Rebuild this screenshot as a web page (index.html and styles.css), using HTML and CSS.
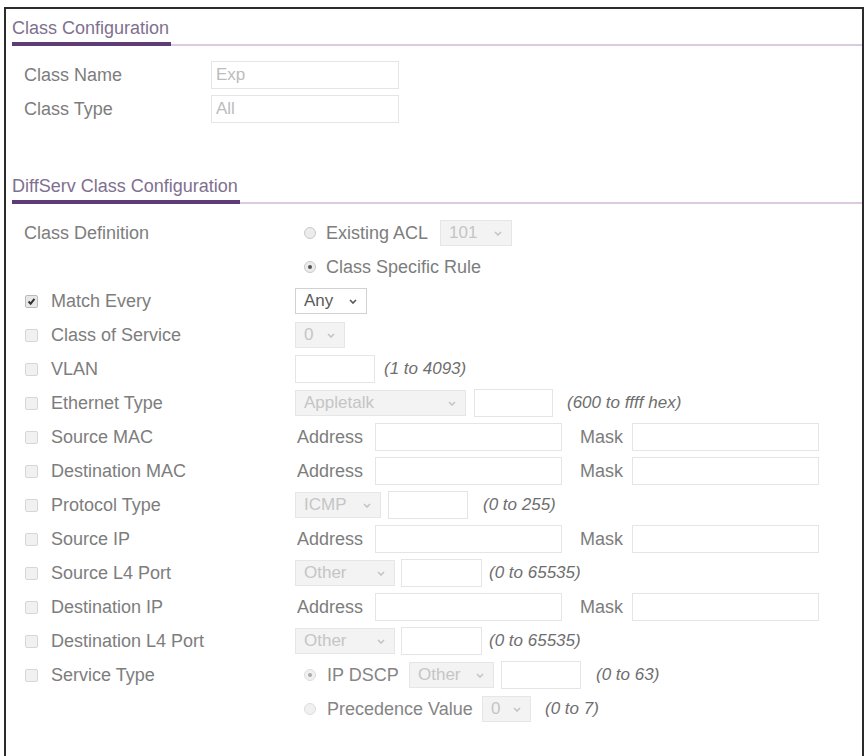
FILE: index.html
```html
<!DOCTYPE html>
<html>
<head>
<meta charset="utf-8">
<link rel="stylesheet" href="styles.css">
</head>
<body>
<div class="panel">
  <h2 class="sec-title"><span>Class Configuration</span></h2>
  <div class="sec1">
    <div class="row1"><span class="lbl1">Class Name</span><span class="box ro w188">Exp</span></div>
    <div class="row1"><span class="lbl1">Class Type</span><span class="box ro w188">All</span></div>
  </div>

  <h2 class="sec-title sec-title2"><span>DiffServ Class Configuration</span></h2>
  <div class="sec2">
    <div class="row">
      <div class="lcol"><span class="lbl">Class Definition</span></div>
      <div class="ctl rgroup">
        <span class="radio"></span><span class="rtxt">Existing ACL</span>
        <span class="sel dis w72 ml12"><span class="sv">101</span><svg class="chev" viewBox="0 0 8 5"><polyline points="1,1 4,4 7,1"/></svg></span>
      </div>
    </div>
    <div class="row">
      <div class="lcol"></div>
      <div class="ctl rgroup">
        <span class="radio on"></span><span class="rtxt">Class Specific Rule</span>
      </div>
    </div>
    <div class="row">
      <div class="lcol"><span class="cb on"><svg viewBox="0 0 13 13"><polyline points="3,6.5 5.5,9 10,3.5"/></svg></span><span class="lbl">Match Every</span></div>
      <div class="ctl">
        <span class="sel act w72"><span class="sv">Any</span><svg class="chev" viewBox="0 0 8 5"><polyline points="1,1 4,4 7,1"/></svg></span>
      </div>
    </div>
    <div class="row">
      <div class="lcol"><span class="cb"></span><span class="lbl">Class of Service</span></div>
      <div class="ctl">
        <span class="sel dis w50"><span class="sv">0</span><svg class="chev" viewBox="0 0 8 5"><polyline points="1,1 4,4 7,1"/></svg></span>
      </div>
    </div>
    <div class="row">
      <div class="lcol"><span class="cb"></span><span class="lbl">VLAN</span></div>
      <div class="ctl">
        <span class="box w80"></span><span class="hint ml9">(1 to 4093)</span>
      </div>
    </div>
    <div class="row">
      <div class="lcol"><span class="cb"></span><span class="lbl">Ethernet Type</span></div>
      <div class="ctl">
        <span class="sel dis w171"><span class="sv">Appletalk</span><svg class="chev" viewBox="0 0 8 5"><polyline points="1,1 4,4 7,1"/></svg></span>
        <span class="box w79 ml8"></span><span class="hint ml14">(600 to ffff hex)</span>
      </div>
    </div>
    <div class="row">
      <div class="lcol"><span class="cb"></span><span class="lbl">Source MAC</span></div>
      <div class="ctl">
        <span class="addr">Address</span><span class="box w187"></span><span class="mask">Mask</span><span class="box w187"></span>
      </div>
    </div>
    <div class="row">
      <div class="lcol"><span class="cb"></span><span class="lbl">Destination MAC</span></div>
      <div class="ctl">
        <span class="addr">Address</span><span class="box w187"></span><span class="mask">Mask</span><span class="box w187"></span>
      </div>
    </div>
    <div class="row">
      <div class="lcol"><span class="cb"></span><span class="lbl">Protocol Type</span></div>
      <div class="ctl">
        <span class="sel dis w86"><span class="sv">ICMP</span><svg class="chev" viewBox="0 0 8 5"><polyline points="1,1 4,4 7,1"/></svg></span>
        <span class="box w80 ml7"></span><span class="hint ml15">(0 to 255)</span>
      </div>
    </div>
    <div class="row">
      <div class="lcol"><span class="cb"></span><span class="lbl">Source IP</span></div>
      <div class="ctl">
        <span class="addr">Address</span><span class="box w187"></span><span class="mask">Mask</span><span class="box w187"></span>
      </div>
    </div>
    <div class="row">
      <div class="lcol"><span class="cb"></span><span class="lbl">Source L4 Port</span></div>
      <div class="ctl">
        <span class="sel dis w100"><span class="sv">Other</span><svg class="chev" viewBox="0 0 8 5"><polyline points="1,1 4,4 7,1"/></svg></span>
        <span class="box w81 ml6"></span><span class="hint ml7">(0 to 65535)</span>
      </div>
    </div>
    <div class="row">
      <div class="lcol"><span class="cb"></span><span class="lbl">Destination IP</span></div>
      <div class="ctl">
        <span class="addr">Address</span><span class="box w187"></span><span class="mask">Mask</span><span class="box w187"></span>
      </div>
    </div>
    <div class="row">
      <div class="lcol"><span class="cb"></span><span class="lbl">Destination L4 Port</span></div>
      <div class="ctl">
        <span class="sel dis w100"><span class="sv">Other</span><svg class="chev" viewBox="0 0 8 5"><polyline points="1,1 4,4 7,1"/></svg></span>
        <span class="box w81 ml6"></span><span class="hint ml7">(0 to 65535)</span>
      </div>
    </div>
    <div class="row">
      <div class="lcol"><span class="cb"></span><span class="lbl">Service Type</span></div>
      <div class="ctl sgroup">
        <span class="radio on dim"></span><span class="stxt w82">IP DSCP</span>
        <span class="sel dis w85"><span class="sv">Other</span><svg class="chev" viewBox="0 0 8 5"><polyline points="1,1 4,4 7,1"/></svg></span>
        <span class="box w80 ml7"></span><span class="hint ml15">(0 to 63)</span>
      </div>
    </div>
    <div class="row">
      <div class="lcol"></div>
      <div class="ctl sgroup">
        <span class="radio dim"></span><span class="stxt w155">Precedence Value</span>
        <span class="sel dis w49"><span class="sv">0</span><svg class="chev" viewBox="0 0 8 5"><polyline points="1,1 4,4 7,1"/></svg></span>
        <span class="hint ml14">(0 to 7)</span>
      </div>
    </div>
  </div>
</div>
</body>
</html>
```
FILE: styles.css
```css
* { box-sizing: border-box; }
body {
  margin: 0;
  background: #fff;
  font-family: "Liberation Sans", Arial, sans-serif;
  color: #7d7d7d;
}
.panel {
  margin: 7px 0 0 4px;
  width: 860px;
  height: 760px;
  border: 2px solid #2b2b2b;
  padding-top: 9px;
  overflow: hidden;
}
.sec-title {
  margin: 0 0 0 6px;
  display: flex;
  border-bottom: 2px solid #dccbe0;
  font-weight: normal;
  font-size: 18px;
}
.sec-title span {
  display: block;
  line-height: 21px;
  padding: 0 2px 3px 0;
  border-bottom: 4px solid #5e3c78;
  margin-bottom: -2px;
  color: #80708f;
}
.sec-title2 { margin-top: 50px; }
.sec1 { margin-top: 12px; padding-left: 18px; }
.row1 { height: 34px; display: flex; align-items: center; }
.lbl1 { width: 187px; font-size: 18px; }
.box {
  display: inline-flex;
  align-items: center;
  height: 28px;
  border: 1px solid #e5e5e5;
  background: #fff;
  font-size: 17px;
  padding-left: 4px;
}
.box.ro { color: #bcbcbc; }
.sec2 { margin-top: 12px; padding-left: 18px; }
.row {
  height: 34px;
  display: grid;
  grid-template-columns: 271px 1fr;
  align-items: center;
}
.lcol { display: flex; align-items: center; }
.lbl { font-size: 18px; }
.cb {
  width: 13px;
  height: 13px;
  margin: 0 13px 0 1px;
  border: 1px solid #d6d6d6;
  background: #f1f1f1;
  border-radius: 2px;
  display: inline-block;
}
.cb svg { width: 11px; height: 11px; display: block; }
.cb svg polyline { fill: none; stroke: #333; stroke-width: 2.4; }
.cb.on { border-color: #bbb; background: #e8e8e8; }
.ctl { display: flex; align-items: center; font-size: 18px; }
.rgroup { padding-left: 9px; }
.sgroup { padding-left: 9px; }
.radio {
  width: 12px;
  height: 12px;
  border-radius: 50%;
  border: 1px solid #c9c9c9;
  background: #ececec;
  display: inline-flex;
  align-items: center;
  justify-content: center;
  margin-right: 10px;
}
.radio.on::after {
  content: "";
  width: 4px;
  height: 4px;
  border-radius: 50%;
  background: #555;
}
.radio.dim { border-color: #ddd; background: #f0f0f0; margin-right: 11px; }
.radio.dim.on::after { background: #aaa; }
.rtxt { color: #7d7d7d; }
.stxt { display: inline-block; color: #858585; }
.sel {
  display: inline-flex;
  align-items: center;
  justify-content: space-between;
  height: 26px;
  padding: 0 9px 0 8px;
  border: 1px solid #e6e6e6;
  font-size: 17px;
}
.sel.dis { background: #f3f3f3; color: #c5c5c5; }
.sel.act { background: #fff; border-color: #d2d2d2; color: #5a5a5a; }
.chev { width: 8px; height: 5px; }
.chev polyline { fill: none; stroke: #c4c4c4; stroke-width: 1.6; }
.sel.act .chev polyline { stroke: #555; }
.hint { font-style: italic; font-size: 17px; color: #6e6e6e; }
.addr { width: 80px; padding-left: 2px; color: #7d7d7d; }
.mask { width: 70px; padding-left: 18px; color: #7d7d7d; }
.w49 { width: 49px; }
.w50 { width: 50px; }
.w72 { width: 72px; }
.w79 { width: 79px; }
.w80 { width: 80px; }
.w81 { width: 81px; }
.w82 { width: 82px; }
.w85 { width: 85px; }
.w86 { width: 86px; }
.w100 { width: 100px; }
.w155 { width: 155px; }
.w171 { width: 171px; }
.w187 { width: 187px; }
.w188 { width: 188px; }
.ml6 { margin-left: 6px; }
.ml7 { margin-left: 7px; }
.ml8 { margin-left: 8px; }
.ml9 { margin-left: 9px; }
.ml12 { margin-left: 12px; }
.ml14 { margin-left: 14px; }
.ml15 { margin-left: 15px; }
```
